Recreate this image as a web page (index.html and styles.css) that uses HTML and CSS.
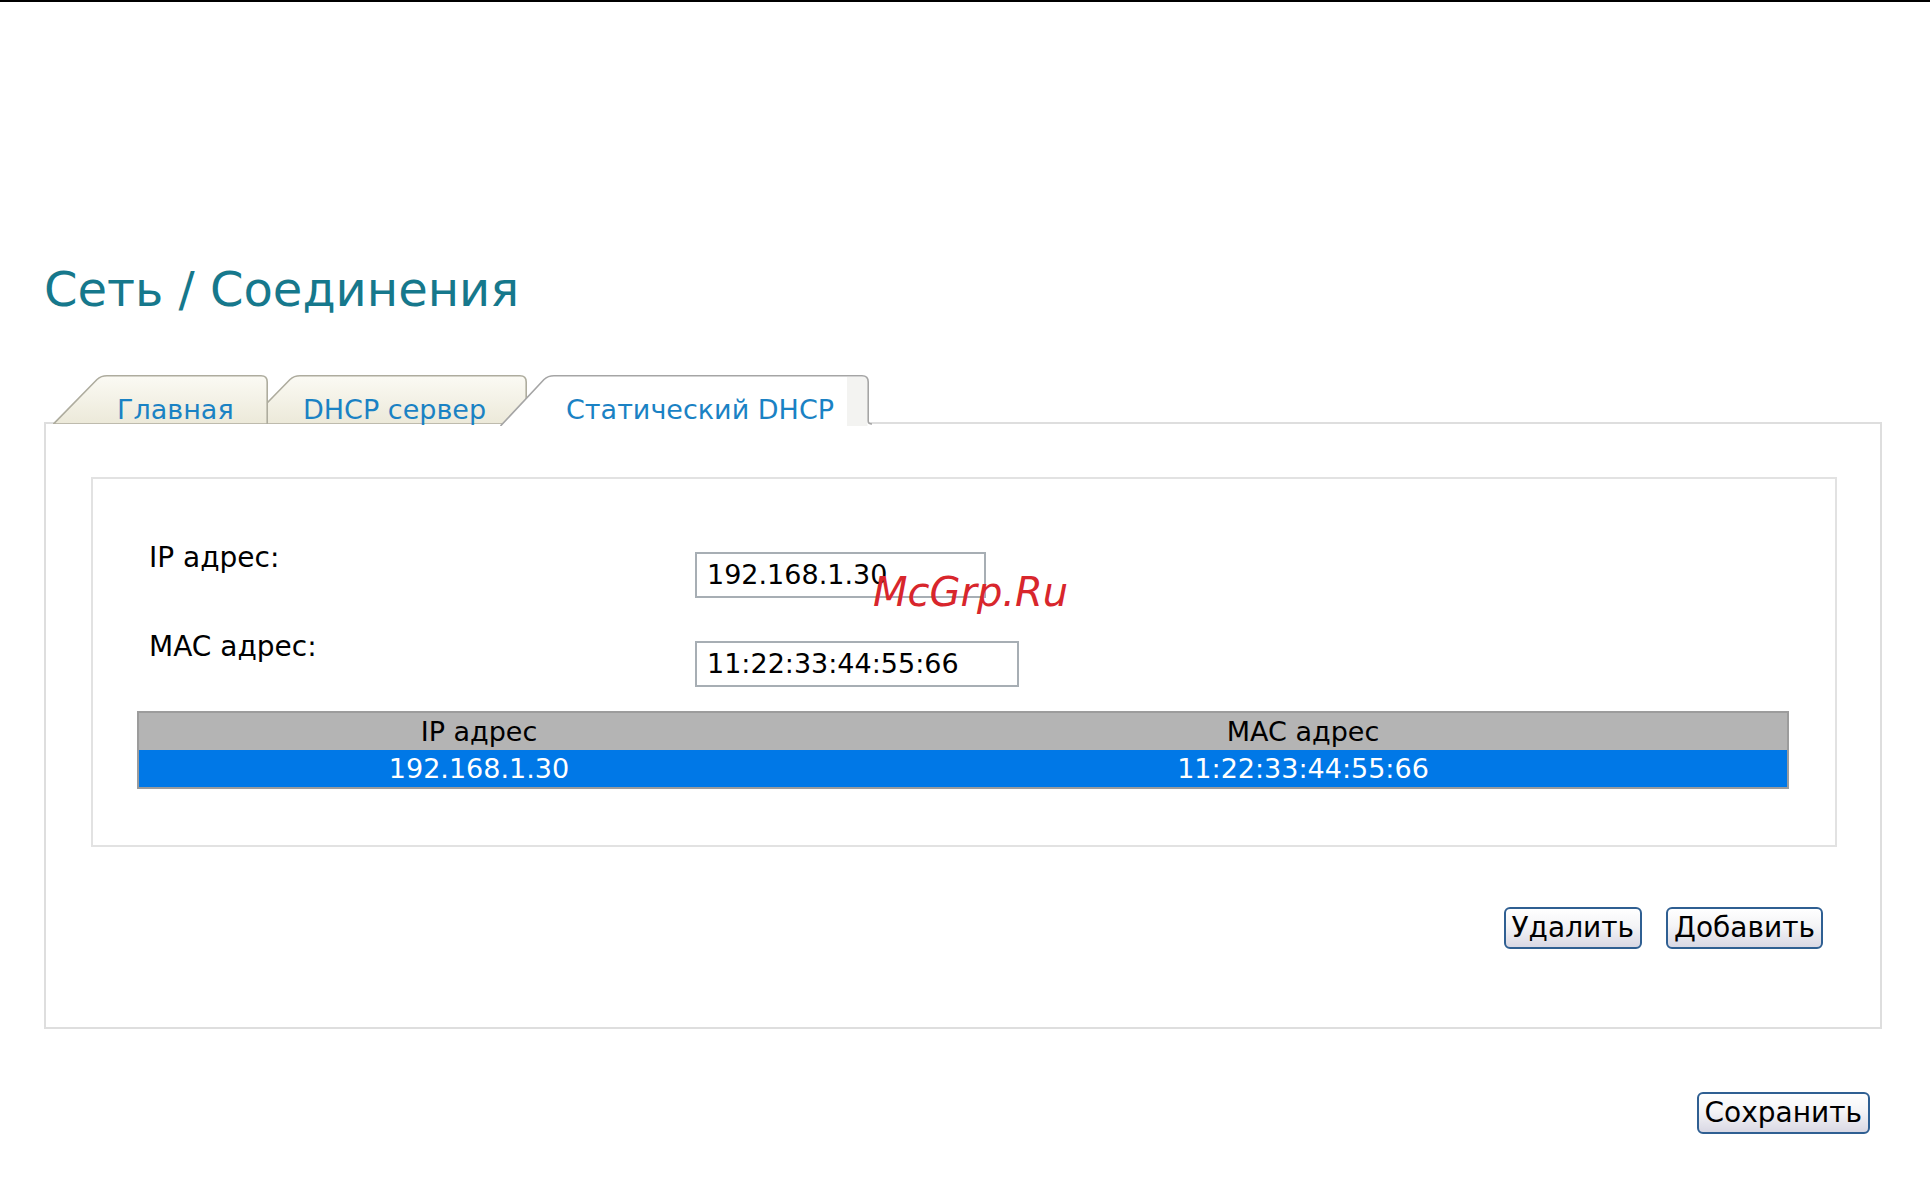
FILE: index.html
```html
<!DOCTYPE html>
<html lang="ru">
<head>
<meta charset="utf-8">
<title>Сеть / Соединения</title>
<link rel="stylesheet" href="styles.css">
</head>
<body>
<div class="topline"></div>
<div class="page">
  <h1 class="title">Сеть / Соединения</h1>

  <div class="tabs">
    <div class="tab tab-main">
      <svg class="tab-bg" width="215" height="49" viewBox="0 0 215 49">
        <defs>
          <linearGradient id="beige" x1="0" y1="0" x2="0" y2="1">
            <stop offset="0" stop-color="#fbfaf4"/>
            <stop offset="1" stop-color="#ece9d9"/>
          </linearGradient>
        </defs>
        <path d="M0.5,49 L44,4.5 Q48,0.8 54,0.8 L208,0.8 Q214.2,0.8 214.2,7 L214.2,49 Z" fill="url(#beige)" stroke="#aeac9e" stroke-width="1.6"/>
      </svg>
      <span class="tab-label">Главная</span>
    </div>
    <div class="tab tab-dhcp">
      <svg class="tab-bg" width="281" height="49" viewBox="0 0 281 49">
        <defs>
          <linearGradient id="beige2" x1="0" y1="0" x2="0" y2="1">
            <stop offset="0" stop-color="#fbfaf4"/>
            <stop offset="1" stop-color="#ece9d9"/>
          </linearGradient>
        </defs>
        <path d="M0.5,49 L44,4.5 Q48,0.8 54,0.8 L274,0.8 Q280.2,0.8 280.2,7 L280.2,49 Z" fill="url(#beige2)" stroke="#aeac9e" stroke-width="1.6"/>
      </svg>
      <span class="tab-label">DHCP сервер</span>
    </div>
    <div class="tab tab-static">
      <svg class="tab-bg" width="372" height="51" viewBox="0 0 372 51">
        <path d="M0.5,51 L44,4.5 Q48,0.8 54,0.8 L362,0.8 Q368.2,0.8 368.2,7 L368.2,51 Z" fill="#ffffff"/>
        <rect x="347" y="2" width="20.5" height="49" fill="#f3f3f1"/>
        <path d="M0.5,51 L44,4.5 Q48,0.8 54,0.8 L362,0.8 Q368.2,0.8 368.2,7 L368.2,46 Q368.2,49 372,49" fill="none" stroke="#a5a5a5" stroke-width="1.6"/>
      </svg>
      <span class="tab-label">Статический DHCP</span>
    </div>
  </div>

  <div class="panel">
    <div class="inner">
      <div class="form">
        <div class="form-row">
          <label class="form-label">IP адрес:</label>
          <div class="field field-ip">192.168.1.30</div>
        </div>
        <div class="form-row">
          <label class="form-label">MAC адрес:</label>
          <div class="field field-mac">11:22:33:44:55:66</div>
        </div>
      </div>
      <table class="list">
        <thead>
          <tr><th class="col-ip">IP адрес</th><th>MAC адрес</th></tr>
        </thead>
        <tbody>
          <tr class="selected"><td>192.168.1.30</td><td>11:22:33:44:55:66</td></tr>
        </tbody>
      </table>
    </div>
    <div class="actions">
      <button class="btn">Удалить</button>
      <button class="btn">Добавить</button>
    </div>
  </div>

  <div class="save-row">
    <button class="btn">Сохранить</button>
  </div>
</div>
<div class="watermark">McGrp.Ru</div>
</body>
</html>
```

FILE: styles.css
```css
html, body {
  margin: 0;
  padding: 0;
  background: #ffffff;
}

body {
  font-family: "DejaVu Sans", Verdana, sans-serif;
  color: #000000;
  width: 1930px;
  min-height: 1179px;
  position: relative;
}

.topline {
  height: 2px;
  background: #000000;
}

.page {
  padding: 0 48px 0 44px;
}

.title {
  margin: 259px 0 0 0;
  font-weight: normal;
  font-size: 48px;
  line-height: 56px;
  color: #16788c;
}

.tabs {
  display: flex;
  height: 49px;
  margin: 58px 0 -2px 9px;
  position: relative;
  z-index: 2;
}

.tab {
  position: relative;
  height: 49px;
  box-sizing: border-box;
  padding-top: 21px;
}

.tab-bg {
  position: absolute;
  left: 0;
  top: 0;
  display: block;
}

.tab-label {
  position: relative;
  display: block;
  font-size: 27px;
  line-height: 27px;
  color: #1a82c4;
  white-space: nowrap;
}

.tab-main {
  width: 215px;
  padding-left: 64px;
  z-index: 2;
}

.tab-dhcp {
  width: 281px;
  margin-left: -22px;
  padding-left: 57px;
  z-index: 1;
}

.tab-static {
  width: 369px;
  margin-left: -27px;
  padding-left: 66px;
  z-index: 3;
}

.panel {
  border: 2px solid #dedede;
  padding: 53px 43px 78px 45px;
  width: 1838px;
  box-sizing: border-box;
}

.inner {
  border: 2px solid #e2e2e2;
  padding: 62px 46px 56px 44px;
}

.form {
  display: flex;
  flex-direction: column;
  gap: 32px;
  padding-left: 12px;
}

.form-row {
  display: flex;
  align-items: flex-start;
}

.form-label {
  width: 546px;
  flex: none;
  font-size: 28px;
  line-height: 34px;
}

.field {
  margin-top: 11px;
  height: 46px;
  box-sizing: border-box;
  border: 2px solid #a7aeb4;
  padding: 0 10px;
  font-size: 27px;
  line-height: 42px;
  color: #000000;
  background: #ffffff;
}

.field-ip {
  width: 291px;
}

.field-mac {
  width: 324px;
}

.list {
  margin-top: 24px;
  width: 1652px;
  border-collapse: collapse;
  border: 2px solid #9c9c9c;
  font-size: 27px;
}

.list th,
.list td {
  padding: 0;
  height: 37px;
  text-align: center;
  font-weight: normal;
  line-height: 37px;
}

.list th {
  background: #b4b4b4;
  color: #000000;
}

.list .col-ip {
  width: 680px;
}

.list .selected td {
  background: #0078e7;
  color: #ffffff;
}

.actions {
  display: flex;
  justify-content: flex-end;
  gap: 24px;
  margin-top: 60px;
  padding-right: 14px;
}

.btn {
  font-family: "DejaVu Sans", Verdana, sans-serif;
  font-size: 28px;
  line-height: 38px;
  height: 42px;
  padding: 0 6px;
  margin: 0;
  color: #000000;
  border: 2px solid #2f5f92;
  border-radius: 6px;
  background: linear-gradient(#ffffff 0%, #f4f4f6 45%, #d9d8e4 100%);
}

.save-row {
  display: flex;
  justify-content: flex-end;
  margin-top: 63px;
  padding-right: 12px;
}

.watermark {
  position: absolute;
  left: 873px;
  top: 572px;
  font-size: 40px;
  line-height: 40px;
  font-style: italic;
  color: #d8262c;
  white-space: nowrap;
}
```
